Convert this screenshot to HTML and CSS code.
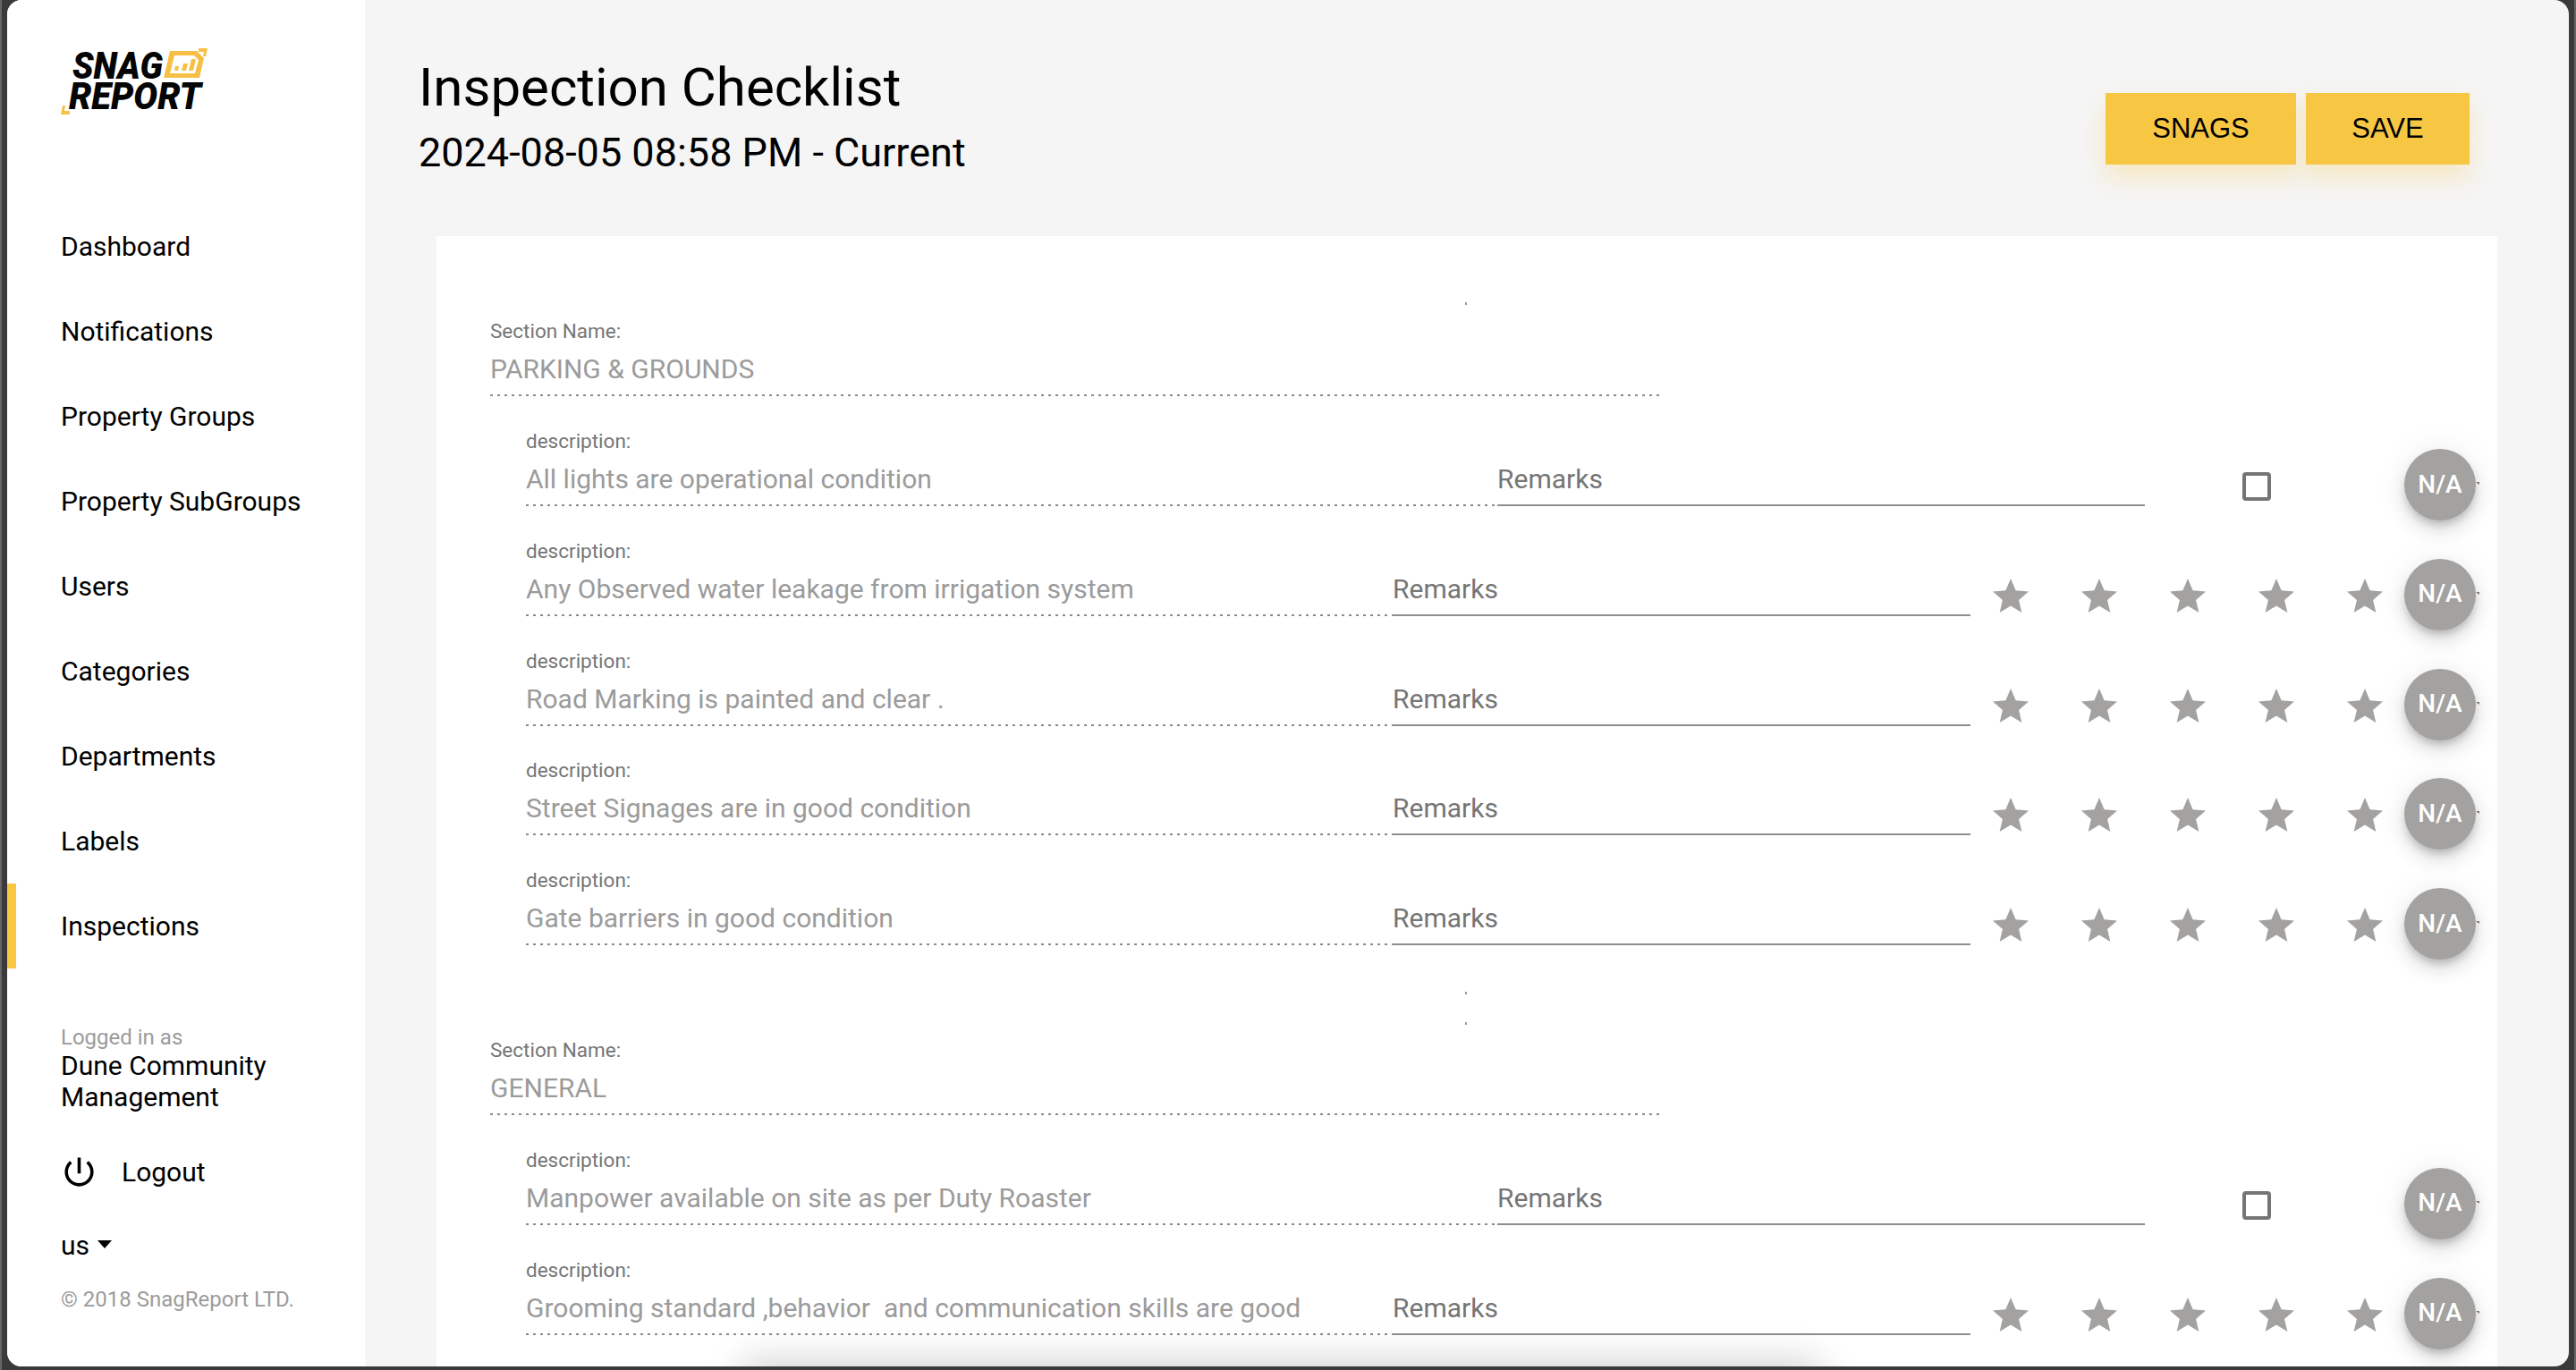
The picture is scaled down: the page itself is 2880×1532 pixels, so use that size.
FILE: index.html
```html
<!DOCTYPE html>
<html lang="en">
<head>
<meta charset="utf-8">
<title>Inspection Checklist</title>
<link rel="stylesheet" href="styles.css">
</head>
<body>
<svg class="defs" width="0" height="0" aria-hidden="true">
  <symbol id="star" viewBox="0 0 24 24"><path d="M12 17.27L18.18 21l-1.64-7.03L22 9.24l-7.19-.61L12 2 9.19 8.63 2 9.24l5.46 4.73L5.82 21z"/></symbol>
</svg>
<div class="window">
  <aside class="sidebar">
    <div class="logo">
      <svg width="170" height="95" viewBox="0 -10 170 95">
        <text class="logo-text" x="13" y="38" textLength="101" lengthAdjust="spacingAndGlyphs">SNAG</text>
        <text class="logo-text" x="9" y="72" textLength="148" lengthAdjust="spacingAndGlyphs">REPORT</text>
        <path class="logo-mark" fill-rule="evenodd" d="M115 37L122 7H152L160 15L155 37ZM122 32H150L154 17L149 12H127Z"/>
        <path class="logo-mark" d="M127 29l1-5h4l-1 5zM135 29l2-8h5l-2 8zM143 29l3-13h5l-3 13z"/>
        <path class="logo-mark" d="M154 4H164L162 13H159L160 8H154Z"/>
        <path class="logo-mark" d="M2 68H5L4 74H10V78H0Z"/>
      </svg>
    </div>
    <nav class="nav">
      <a class="nav-item">Dashboard</a>
      <a class="nav-item">Notifications</a>
      <a class="nav-item">Property Groups</a>
      <a class="nav-item">Property SubGroups</a>
      <a class="nav-item">Users</a>
      <a class="nav-item">Categories</a>
      <a class="nav-item">Departments</a>
      <a class="nav-item">Labels</a>
      <a class="nav-item active">Inspections</a>
    </nav>
    <div class="account">
      <div class="logged-label">Logged in as</div>
      <div class="logged-name">Dune Community<br>Management</div>
    </div>
    <a class="logout">
      <svg class="power" viewBox="0 0 24 24" width="43" height="43"><path d="M13 3h-2v10h2V3zm4.830 2.170l-1.420 1.420C17.990 7.860 19 9.810 19 12c0 3.870-3.130 7-7 7s-7-3.130-7-7c0-2.190 1.010-4.140 2.580-5.420L6.170 5.170C4.230 6.820 3 9.260 3 12c0 4.970 4.030 9 9 9s9-4.030 9-9c0-2.740-1.230-5.180-3.170-6.830z"/></svg>
      <span>Logout</span>
    </a>
    <div class="lang">us<i class="caret"></i></div>
    <div class="copyright">© 2018 SnagReport LTD.</div>
  </aside>

  <main class="main">
    <header class="header">
      <div class="titles">
        <h1 class="title">Inspection Checklist</h1>
        <h2 class="subtitle">2024-08-05 08:58 PM - Current</h2>
      </div>
      <div class="actions">
        <button class="btn btn-snags">SNAGS</button>
        <button class="btn btn-save">SAVE</button>
      </div>
    </header>

    <section class="card">
      <div class="tick tick-first"></div>
      <div class="field section-field"><label class="field-label">Section Name:</label><div class="field-value">PARKING &amp; GROUNDS</div></div>

      <div class="row row-check">
        <div class="field desc"><label class="field-label">description:</label><div class="field-value">All lights are operational condition</div></div>
        <div class="remarks">Remarks</div>
        <div class="checkbox"></div>
        <button class="na">N/A</button>
      </div>
      <div class="row row-stars">
        <div class="field desc"><label class="field-label">description:</label><div class="field-value">Any Observed water leakage from irrigation system</div></div>
        <div class="remarks">Remarks</div>
        <div class="stars"><svg class="star"><use href="#star"/></svg><svg class="star"><use href="#star"/></svg><svg class="star"><use href="#star"/></svg><svg class="star"><use href="#star"/></svg><svg class="star"><use href="#star"/></svg></div>
        <button class="na">N/A</button>
      </div>
      <div class="row row-stars">
        <div class="field desc"><label class="field-label">description:</label><div class="field-value">Road Marking is painted and clear .</div></div>
        <div class="remarks">Remarks</div>
        <div class="stars"><svg class="star"><use href="#star"/></svg><svg class="star"><use href="#star"/></svg><svg class="star"><use href="#star"/></svg><svg class="star"><use href="#star"/></svg><svg class="star"><use href="#star"/></svg></div>
        <button class="na">N/A</button>
      </div>
      <div class="row row-stars">
        <div class="field desc"><label class="field-label">description:</label><div class="field-value">Street Signages are in good condition</div></div>
        <div class="remarks">Remarks</div>
        <div class="stars"><svg class="star"><use href="#star"/></svg><svg class="star"><use href="#star"/></svg><svg class="star"><use href="#star"/></svg><svg class="star"><use href="#star"/></svg><svg class="star"><use href="#star"/></svg></div>
        <button class="na">N/A</button>
      </div>
      <div class="row row-stars">
        <div class="field desc"><label class="field-label">description:</label><div class="field-value">Gate barriers in good condition</div></div>
        <div class="remarks">Remarks</div>
        <div class="stars"><svg class="star"><use href="#star"/></svg><svg class="star"><use href="#star"/></svg><svg class="star"><use href="#star"/></svg><svg class="star"><use href="#star"/></svg><svg class="star"><use href="#star"/></svg></div>
        <button class="na">N/A</button>
      </div>

      <div class="tick tick-end"></div>
      <div class="tick tick-start"></div>
      <div class="field section-field"><label class="field-label">Section Name:</label><div class="field-value">GENERAL</div></div>

      <div class="row row-check">
        <div class="field desc"><label class="field-label">description:</label><div class="field-value">Manpower available on site as per Duty Roaster</div></div>
        <div class="remarks">Remarks</div>
        <div class="checkbox"></div>
        <button class="na">N/A</button>
      </div>
      <div class="row row-stars">
        <div class="field desc"><label class="field-label">description:</label><div class="field-value">Grooming standard ,behavior&nbsp; and communication skills are good</div></div>
        <div class="remarks">Remarks</div>
        <div class="stars"><svg class="star"><use href="#star"/></svg><svg class="star"><use href="#star"/></svg><svg class="star"><use href="#star"/></svg><svg class="star"><use href="#star"/></svg><svg class="star"><use href="#star"/></svg></div>
        <button class="na">N/A</button>
      </div>
    </section>
  </main>
  <div class="edge-shadow"></div>
</div>
</body>
</html>
```
FILE: styles.css
```css
* { box-sizing: border-box; }
html, body { margin: 0; height: 100%; }
body {
  background: #3a3a3a;
  border-left: 2px solid #666;
  border-right: 2px solid #666;
  overflow: hidden;
  font-family: Roboto, "Liberation Sans", sans-serif;
  color: #000;
}
.defs { position: absolute; }
.window {
  position: relative;
  display: flex;
  margin: 0 6px;
  height: 1528px;
  border-radius: 16px;
  overflow: hidden;
  background: #f5f5f5;
}

/* Sidebar */
.sidebar {
  flex: 0 0 400px;
  background: #fff;
  display: flex;
  flex-direction: column;
}
.logo { height: 228px; padding: 40px 0 0 60px; }
.logo svg { display: block; }
.logo-text { font-family: Roboto, sans-serif; font-weight: 900; font-style: italic; font-size: 42px; fill: #050505; }
.logo-mark { fill: #f7bf45; }
.nav { display: flex; flex-direction: column; }
.nav-item {
  height: 95px;
  line-height: 95px;
  padding-left: 60px;
  font-size: 30px;
}
.nav-item.active { border-left: 10px solid #f7c744; padding-left: 50px; }
.account { margin: 63px 0 0 60px; }
.logged-label { font-size: 24px; line-height: 28px; color: #9b9b9b; }
.logged-name { font-size: 30px; line-height: 35px; }
.logout { display: flex; align-items: center; gap: 26px; margin: 45px 0 0 60px; font-size: 30px; height: 43px; }
.power { display: block; fill: #000; margin-left: -1px; }
.lang { display: flex; align-items: center; gap: 9px; margin: 41px 0 0 60px; font-size: 30px; line-height: 40px; }
.caret { width: 0; height: 0; border-left: 8px solid transparent; border-right: 8px solid transparent; border-top: 9px solid #000; margin-top: -4px; }
.copyright { margin: 25px 0 0 60px; font-size: 24px; line-height: 30px; color: #9b9b9b; }

/* Main */
.main { flex: 1; min-width: 0; display: flex; flex-direction: column; }
.header { height: 264px; padding: 62px 111px 0 60px; display: flex; justify-content: space-between; align-items: flex-start; }
.title { margin: 0; font-size: 60px; line-height: 72px; font-weight: 400; }
.subtitle { margin: 9px 0 0; font-size: 45px; line-height: 56px; font-weight: 400; }
.actions { display: flex; gap: 11px; margin-top: 42px; }
.btn {
  height: 80px;
  border: 0;
  background: #f7c744;
  font-family: "Liberation Sans", sans-serif;
  font-size: 31px;
  color: #000;
  box-shadow: 0 14px 28px rgba(247, 199, 68, .3);
}
.btn-snags { width: 213px; }
.btn-save { width: 183px; }

/* Card */
.card { flex: 1; margin: 0 80px; padding-top: 74px; background: #fff; }
.tick { width: 2px; height: 3px; background: #999; margin-left: 1150px; }
.tick-first { margin-bottom: 14px; }
.tick-end { margin-top: 40px; }
.tick-start { margin-top: 31px; margin-bottom: 13px; }
.field {
  height: 88px;
  background: linear-gradient(to right, #8a8a8a 3px, transparent 3px) left bottom / 8px 2px repeat-x;
}
.section-field { width: 1307px; margin: 0 0 12px 60px; }
.field-label { display: block; height: 30px; line-height: 30px; font-size: 22.5px; color: #757575; }
.field-value { height: 56px; line-height: 56px; font-size: 30px; color: #9b9b9b; white-space: nowrap; }

.row { display: flex; align-items: flex-start; height: 122.75px; padding: 23px 0 0 100px; width: 2280px; }
.row-check .desc { width: 1086px; }
.row-check .remarks { width: 724px; }
.row-stars .desc { width: 969px; }
.row-stars .remarks { width: 646px; }
.remarks {
  height: 88px;
  padding: 30px 0 0;
  line-height: 56px;
  font-size: 30px;
  color: #757575;
  border-bottom: 2px solid #8e8e8e;
}
.checkbox { width: 32px; height: 32px; margin: 50px 0 0 109px; border: 4px solid #757575; border-radius: 4px; }
.stars { display: flex; gap: 51px; margin: 42px 0 0 21px; }
.star { display: block; width: 48px; height: 48px; fill: #a3a2a0; }
.na {
  position: relative;
  flex: none;
  margin: 24px 0 0 auto;
  width: 80px;
  height: 80px;
  border: 0;
  border-radius: 50%;
  padding: 0 0 2px;
  background: #a3a2a0;
  color: #fff;
  font-family: Roboto, sans-serif;
  font-size: 28px;
  font-weight: 500;
  box-shadow: 0 6px 10px -2px rgba(0, 0, 0, .2), 0 12px 20px rgba(0, 0, 0, .1), 0 2px 36px rgba(0, 0, 0, .08);
}
.na::after {
  content: "";
  position: absolute;
  left: 80px;
  top: 37px;
  border-top: 3px solid #777;
  border-left: 4px solid transparent;
}

/* Soft shadow of something just below the fold */
.edge-shadow {
  position: absolute;
  left: 826px;
  bottom: -40px;
  width: 1196px;
  height: 40px;
  box-shadow: 0 0 44px 4px rgba(0, 0, 0, .2);
  pointer-events: none;
}
```
